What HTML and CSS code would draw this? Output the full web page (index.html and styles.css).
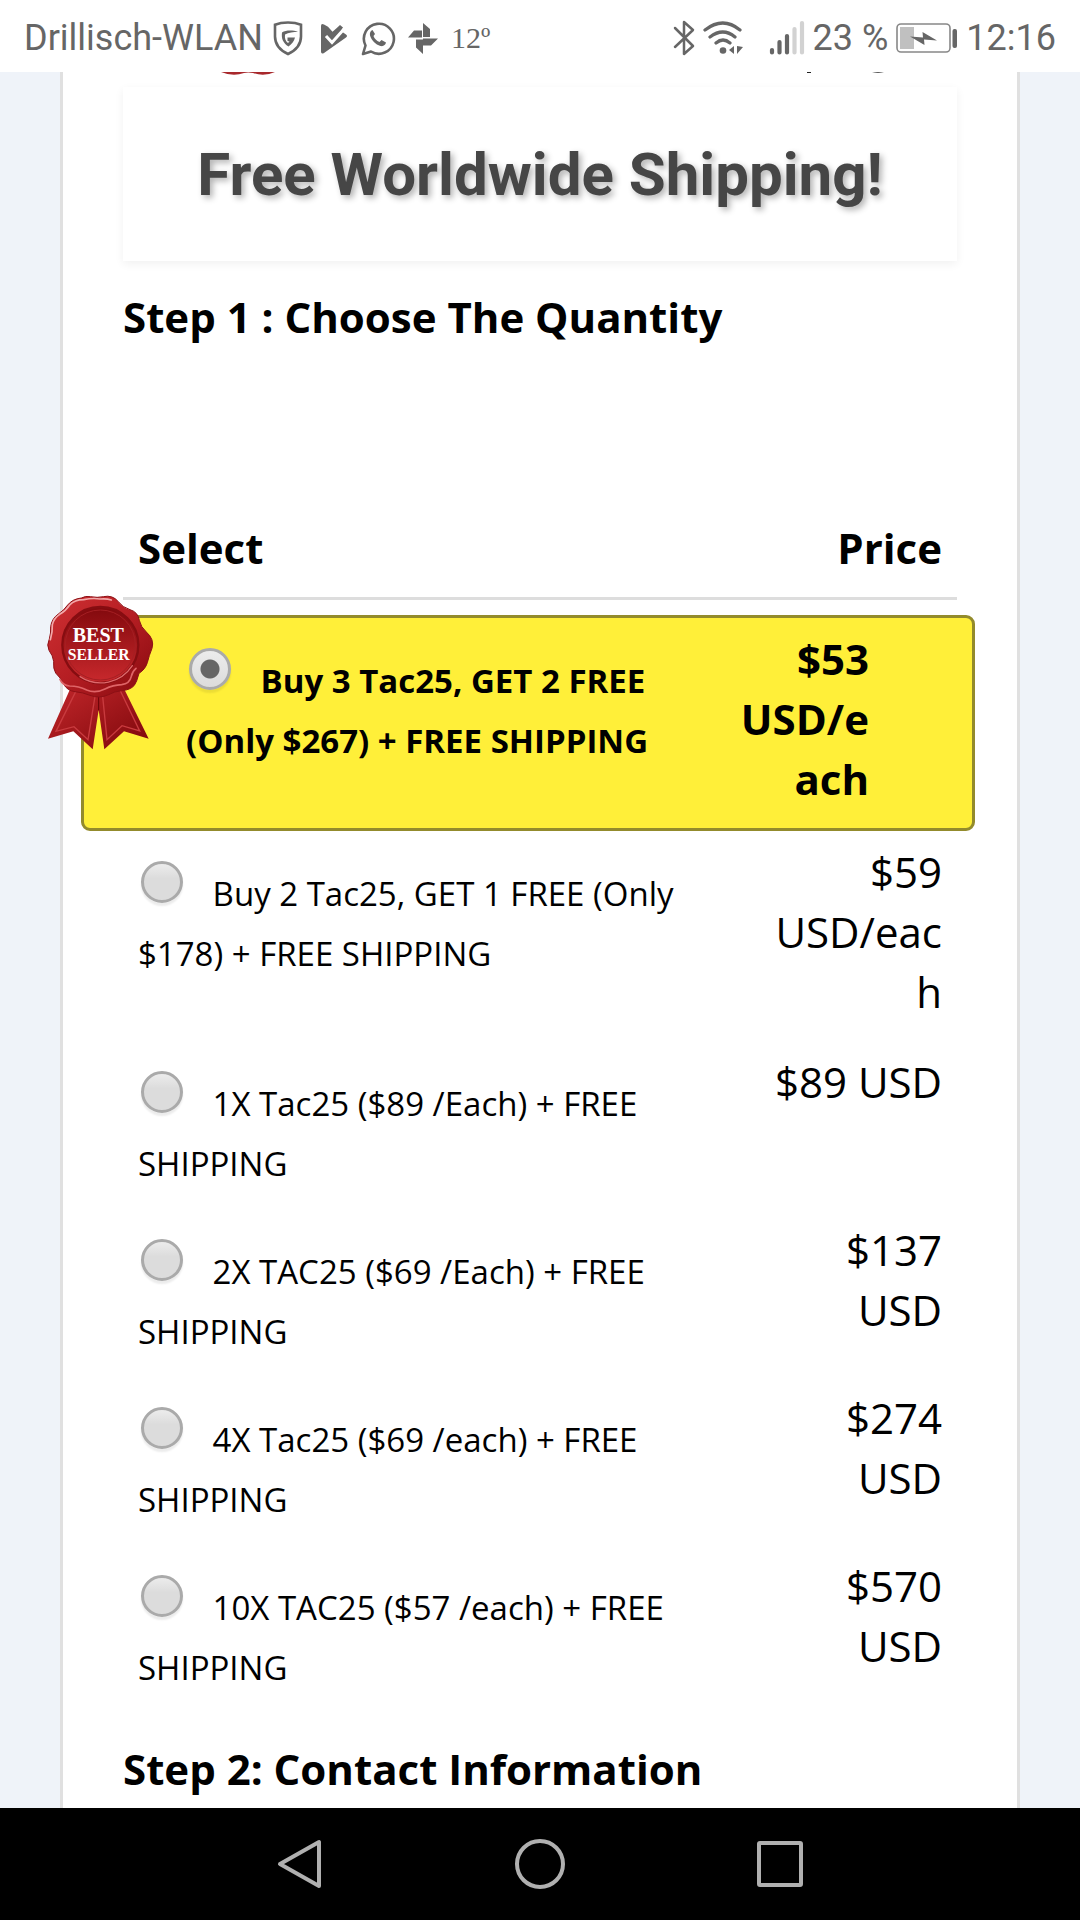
FILE: index.html
```html
<!DOCTYPE html>
<html lang="en">
  <head>
    <meta charset="UTF-8" />
    <meta name="viewport" content="width=device-width, initial-scale=1.0" />
    <title>Free Worldwide Shipping!</title>
    <link rel="stylesheet" href="styles.css">
  </head>

  <body>
    <header class="status-bar">
      <div class="status-group">
        <span>Drillisch-WLAN</span>
        <!-- shield -->
        <svg class="icon" viewBox="0 0 37 36" width="37" height="36" fill="none">
          <path d="M17 2.500c5 0 9.500.8 13 2.200v11.800C30 24.500 24.500 30.500 17 34 9.500 30.500 4 24.500 4 16.500V4.700C7.500 3.300 12 2.500 17 2.500z" stroke="#666" stroke-width="2.600" />
          <path d="M27 12c-5-2-12-2-16 .5-.8 6 1 10.500 6.500 14 3.500-2.500 5.500-5 6.500-9h-7.500v3.500l2 .5-1.500 1.500c-2.500-2-3.500-4.500-3-8.500 3.500-2 8.500-2.500 13-2.500z" fill="#666" />
        </svg>
        <!-- play with check mark -->
        <svg class="icon" viewBox="0 0 37 36" width="37" height="36" fill="none">
          <path d="M5 6q0-3 3-1.500l4 2.200 4.500 5 4-3.500L24 5l3 2.500-2 3.500 5 3.500q2 1.500 0 3L8 33q-3 1.500-3-1.500z" fill="#666" />
          <path d="M10 16l6 6.500L28.500 8.500" stroke="#fff" stroke-width="3" />
        </svg>
        <!-- phone bubble -->
        <svg class="icon" viewBox="0 0 37 36" width="37" height="36" fill="none">
          <path d="M2 34l2.500-8.500A15 15 0 1 1 10 31.500z" stroke="#666" stroke-width="2.600" stroke-linejoin="round" />
          <path d="M11.500 10c-2 .8-3 3-2.500 5.500 1.500 5 5.500 9 10.500 10.500 3 .6 5-1 5.500-3.500l-4.500-2.500-2 2c-3-1.200-5-3.200-6-6l1.500-2z" fill="#666" />
        </svg>
        <!-- pinwheel -->
        <svg class="icon" viewBox="0 0 37 36" width="37" height="36" fill="#666">
          <path d="M17 3l7 6v8h-7zM32 18.500l-7 7h-8v-7zM17 34l-7-6.500v-8h7zM2 17.500l6-7h8v7z" />
        </svg>
        <span class="temperature">12º</span>
      </div>

      <div class="status-group">
        <!-- bluetooth -->
        <svg class="icon" viewBox="0 0 22 36" width="22" height="36" fill="none" stroke="#666" stroke-width="2.500" stroke-linejoin="round" stroke-linecap="round">
          <path d="M2 8l18 18-9 8V2l9 8L2 27" />
        </svg>
        <!-- wifi -->
        <svg class="icon" viewBox="0 0 58 36" width="58" height="36" fill="none" stroke="#666" stroke-width="3.200" stroke-linecap="round">
          <path d="M2 10q18-14 35 0M7 17q13-10 25 0M13 23q7-6 14 0" />
          <circle cx="20" cy="30.500" r="3.300" fill="#666" stroke="none" />
          <path d="M31 26v8l-5-4zM34 26v8l6-7z" fill="#666" stroke="none" />
        </svg>
        <!-- signal -->
        <svg class="icon" viewBox="0 0 36 36" width="36" height="36" fill="none" stroke-width="4.200" stroke-linecap="round">
          <path d="M3 30v2.500M10.500 22v10.500M18 16v16.500" stroke="#666" />
          <path d="M25.500 9v23.500M33 3v29.500" stroke="#d2d2d2" />
        </svg>
        <span>23 %</span>
        <!-- battery -->
        <svg class="icon" viewBox="0 0 62 36" width="62" height="36" fill="none">
          <rect x="1" y="4" width="53" height="28" rx="4" stroke="#888" stroke-width="1.600" />
          <path d="M4 7h14v22H4z" fill="#c0c0c0" />
          <rect x="56.500" y="9" width="4.500" height="19" rx="2" fill="#666" />
          <path d="M14 16.500l13 1-.5-5.500L41 20.500l-13-1 .5 5.500z" fill="#666" />
        </svg>
        <span>12:16</span>
      </div>
    </header>

    <main class="page">
      <div class="order-card">
        <!-- lower edge of the logo row, scrolled under the status bar -->
        <svg class="logo-edge" viewBox="0 0 834 15" height="15" preserveAspectRatio="xMinYMin" aria-hidden="true">
          <path d="M98 0h54q-11 5-22 1-5-1-9 0-11 4-23-1z" fill="#a8282c" />
          <path d="M684 0h4v1h-4zM749 0h12q-6 1.500-12 0z" fill="#222" />
        </svg>

        <div class="banner">
          <h1>Free Worldwide Shipping!</h1>
        </div>

        <h2 class="step-title">Step 1 : Choose The Quantity</h2>

        <form id="order">
          <table class="options">
            <thead>
              <tr>
                <th class="option">Select</th>
                <th class="price">Price</th>
              </tr>
            </thead>
            <tbody>
              <tr class="best-seller">
                <td class="option">
                  <svg class="badge" viewBox="48 45 324 468" width="108" height="156" role="img" aria-label="Best seller">
                    <defs>
                      <linearGradient id="seal" x1="0" y1="0" x2="1" y2="1">
                        <stop offset="0" stop-color="#cf3033" />
                        <stop offset=".5" stop-color="#b51e23" />
                        <stop offset="1" stop-color="#85090e" />
                      </linearGradient>
                      <linearGradient id="disc" x1="0" y1="0" x2="0" y2="1">
                        <stop offset="0" stop-color="#82090d" />
                        <stop offset="1" stop-color="#c9292d" />
                      </linearGradient>
                      <linearGradient id="ribbon" x1="0" y1="0" x2="1" y2="1">
                        <stop offset="0" stop-color="#c5282c" />
                        <stop offset="1" stop-color="#7d070b" />
                      </linearGradient>
                    </defs>
                    <path d="M127 312L54 476l76-22 58 54 18-118 17 118 59-54 74 22-82-166z" fill="url(#ribbon)" />
                    <path d="M142 325L78 454l54-14 42 39 21-130M218 349l13 130 45-42 53 16-61-127" fill="none" stroke="#c93b3f" stroke-width="4" />
                    <path d="M206 345v46" stroke="#650307" stroke-width="3" />
                    <path d="M154 54q12-7 28-4 20 4 38 0 28-6 45 15 12 17 35 24 24 7 28 32 4 20 21 35 25 22 17 49-9 22-14 43-6 20-25 32-7 27-14 36-12 14-38 16-22 2-39 12-28 13-56 2-22-9-45-11-24-3-34-23-9-19-24-33-8-12-6-35-2-17-14-33-8-16 1-34 5-18 4-37 3-24 23-38 17-11 28-27 14-18 41-21z" fill="url(#seal)" stroke="#8d1015" stroke-width="3" />
                    <path d="M61 179q7-25 6-45 4-19 22-31 18-10 30-28 15-16 42-16 28-6 49-2 20-2 34 3" fill="none" stroke="#f2a9aa" stroke-width="5" stroke-linecap="round" />
                    <path d="M90 298q8 18 29 20 27 0 51 12 26 11 55-3 24-12 50-13 24-3 29-25 3-15 14-24" fill="none" stroke="#df6467" stroke-width="5" stroke-linecap="round" />
                    <circle cx="211" cy="195" r="114" fill="url(#disc)" stroke="#860d11" stroke-width="7" />
                    <path d="M150 290a113 113 0 0 0 157-33" fill="none" stroke="#e0686b" stroke-width="4" stroke-linecap="round" />
                    <circle cx="211" cy="195" r="105" fill="none" stroke="#a51f23" stroke-width="3" />
                    <text class="badge-text" x="205" y="186" font-size="60">BEST</text>
                    <text class="badge-text" x="206" y="241" font-size="47">SELLER</text>
                  </svg>
                  <label for="qty-5"><input type="radio" id="qty-5" name="quantity" checked /> Buy 3 Tac25, GET 2 FREE (Only $267) + FREE SHIPPING</label>
                </td>
                <td class="price">$53 USD/each</td>
              </tr>
              <tr>
                <td class="option">
                  <label for="qty-3"><input type="radio" id="qty-3" name="quantity" /> Buy 2 Tac25, GET 1 FREE (Only $178) + FREE SHIPPING</label>
                </td>
                <td class="price">$59 USD/each</td>
              </tr>
              <tr>
                <td class="option">
                  <label for="qty-1"><input type="radio" id="qty-1" name="quantity" /> 1X Tac25 ($89 /Each) + FREE SHIPPING</label>
                </td>
                <td class="price">$89 USD</td>
              </tr>
              <tr>
                <td class="option">
                  <label for="qty-2"><input type="radio" id="qty-2" name="quantity" /> 2X TAC25 ($69 /Each) + FREE SHIPPING</label>
                </td>
                <td class="price">$137 USD</td>
              </tr>
              <tr>
                <td class="option">
                  <label for="qty-4"><input type="radio" id="qty-4" name="quantity" /> 4X Tac25 ($69 /each) + FREE SHIPPING</label>
                </td>
                <td class="price">$274 USD</td>
              </tr>
              <tr>
                <td class="option">
                  <label for="qty-10"><input type="radio" id="qty-10" name="quantity" /> 10X TAC25 ($57 /each) + FREE SHIPPING</label>
                </td>
                <td class="price">$570 USD</td>
              </tr>
            </tbody>
          </table>
        </form>

        <h2 class="step-title">Step 2: Contact Information</h2>
      </div>
    </main>

    <nav class="nav-bar">
      <button type="button" aria-label="Back">
        <svg viewBox="0 0 52 52" width="52" height="52"><path d="M45 4v44L6 26z" /></svg>
      </button>
      <button type="button" aria-label="Home">
        <svg viewBox="0 0 52 52" width="52" height="52"><circle cx="26" cy="26" r="23" /></svg>
      </button>
      <button type="button" aria-label="Recent apps">
        <svg viewBox="0 0 52 52" width="52" height="52"><rect x="5" y="5" width="42" height="42" rx="1" /></svg>
      </button>
    </nav>
  </body>
</html>
```

FILE: styles.css
```css
*,
*::before,
*::after {
  box-sizing: border-box;
}
:root {
  --bg: #eff3f9;
  --surface: #ffffff;
  --line: #e0e0e0;
  --highlight: #ffef39;
  --highlight-border: #938b2c;
  --status: #666666;
}
body {
  margin: 0;
  min-height: 100vh;
  display: flex;
  flex-direction: column;
  font-family: "Open Sans", sans-serif;
  font-size: 42px;
  line-height: 60px;
  background: var(--bg);
  color: #000;
}

/* status bar */
.status-bar {
  display: flex;
  justify-content: space-between;
  align-items: center;
  height: 72px;
  padding: 3px 24px 0;
  background: var(--surface);
  color: var(--status);
  font-family: Roboto, sans-serif;
  font-size: 36px;
  line-height: 48px;
}
.status-group {
  display: flex;
  align-items: center;
  gap: 8px;
  white-space: nowrap;
}
.icon {
  flex: none;
}
.temperature {
  font-family: "Liberation Serif", serif;
  font-size: 30px;
}

/* order form */
.page {
  flex: 1;
  padding: 0 60px;
  display: flex;
}
.order-card {
  flex: 1;
  min-width: 0;
  padding: 0 60px;
  background: var(--surface);
  border: solid var(--line);
  border-width: 0 3px;
}
.logo-edge {
  display: block;
  width: 100%;
}
.banner {
  padding: 53px 30px 51px;
  box-shadow: 0 3px 9px rgba(0, 0, 0, 0.06);
  text-align: center;
}
.banner h1 {
  margin: 0;
  font-family: Roboto, sans-serif;
  font-size: 60px;
  line-height: 70px;
  color: #464646;
  text-shadow: 3px 3px 6px rgba(0, 0, 0, 0.3);
}
.step-title {
  margin: 26px 0 0;
  font-size: 42px;
  line-height: 60px;
}

/* quantity table */
.options {
  display: block;
  margin-top: 159px;
}
.options thead,
.options tbody {
  display: block;
}
.options thead {
  margin-bottom: 15px;
  border-bottom: 3px solid #dddddd;
}
.options tr {
  display: flex;
}
.options .option {
  flex: 1;
  min-width: 0;
  padding: 14px 15px 15px;
  text-align: left;
}
.options td.option {
  font-size: 33px;
}
.options .price {
  flex: 0 0 25%;
  padding: 11px 15px 19px;
  text-align: right;
  overflow-wrap: anywhere;
}
.options th.option,
.options th.price {
  padding: 12px 15px 19px;
}
.options .best-seller {
  position: relative;
  margin: 0 -18px 0 -42px;
  padding: 0 88px 0 87px;
  background: var(--highlight);
  border: 3px solid var(--highlight-border);
  border-radius: 9px;
  font-weight: 700;
}
.badge {
  position: absolute;
  top: -23px;
  left: -38px;
}
.badge-text {
  font-family: "Liberation Serif", serif;
  font-weight: 700;
  fill: #fff;
  text-anchor: middle;
}
.option input {
  appearance: none;
  width: 42px;
  height: 42px;
  margin: 16px 21px 3px 3px;
  vertical-align: baseline;
  border: 3px solid #aaaaaa;
  border-radius: 50%;
  background: linear-gradient(#ececec, #dcdcdc 40%);
  box-shadow: 0 3px 2px rgba(0, 0, 0, 0.08);
}
.option input:checked {
  background: radial-gradient(circle, #666 9px, transparent 10px),
    linear-gradient(#ececec, #dcdcdc);
}

/* system navigation */
.nav-bar {
  display: flex;
  justify-content: center;
  height: 112px;
  background: #000;
}
.nav-bar button {
  flex: 0 0 240px;
  padding: 0;
  border: 0;
  background: none;
}
.nav-bar svg {
  display: block;
  margin: 0 auto;
  fill: none;
  stroke: #b0b0b0;
  stroke-width: 4;
  stroke-linejoin: round;
}
```
